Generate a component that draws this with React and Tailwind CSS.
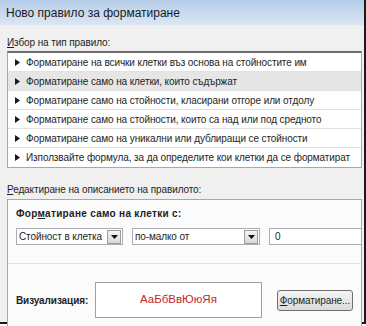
import React from 'react'

const rules = [
  'Форматиране на всички клетки въз основа на стойностите им',
  'Форматиране само на клетки, които съдържат',
  'Форматиране само на стойности, класирани отгоре или отдолу',
  'Форматиране само на стойности, които са над или под средното',
  'Форматиране само на уникални или дублиращи се стойности',
  'Използвайте формула, за да определите кои клетки да се форматират'
]

function Arrow() {
  return (
    <svg width="5" height="7" viewBox="0 0 5 7" className="shrink-0">
      <path d="M0 0 L5 3.5 L0 7 Z" fill="#1a1a1a" />
    </svg>
  )
}

function DropButton() {
  return (
    <div className="w-[14px] h-[14px] border border-[#9c9c9c] bg-gradient-to-b from-[#f4f4f4] to-[#d8d8d8] flex items-center justify-center shrink-0">
      <svg width="7" height="4" viewBox="0 0 7 4">
        <path d="M0 0 L7 0 L3.5 4 Z" fill="#111" />
      </svg>
    </div>
  )
}

function Combo({ label, width }) {
  return (
    <div className={`h-[17px] border border-[#abadb3] bg-white flex items-center justify-between pl-[2px] pr-[1px] ${width}`}>
      <span className="leading-none">{label}</span>
      <DropButton />
    </div>
  )
}

export default function App() {
  return (
    <div className="w-[366px] h-[326px] bg-white overflow-hidden font-[family-name:'Liberation_Sans',Arial,sans-serif] text-[10px] tracking-[-0.1px] text-[#1e1e1e]">
      <div className="w-[366px] h-[324px] bg-[#f0f0f0] border-r-2 border-b-2 border-[#1a1a1a] flex flex-col">
        {/* title bar */}
        <div className="h-[25px] shrink-0 bg-gradient-to-b from-[#b4cde9] to-[#dbe6f3] flex items-center px-[6px] text-[12px] tracking-normal text-[#1b1b1b]">
          Ново правило за форматиране
        </div>

        <div className="pl-[7px] pr-[2px] flex flex-col">
          <div className="mt-[11px] h-[14px] leading-[14px]">
            <span className="underline">И</span>збор на тип правило:
          </div>

          {/* rule type list */}
          <div className="mt-[1px] bg-white border border-[#a8a8a8] border-t-2 border-t-[#6e6e6e]">
            {rules.map((r, i) => (
              <div
                key={i}
                className={`h-[19px] flex items-center gap-[6px] pl-[7px] whitespace-nowrap ${i < rules.length - 1 ? 'border-b border-[#e2e2e2]' : ''} ${i === 1 ? 'bg-[#e6e6e6]' : ''}`}
              >
                <Arrow />
                <span>{r}</span>
              </div>
            ))}
          </div>

          <div className="mt-[15px] h-[14px] leading-[14px]">
            <span className="underline">Р</span>едактиране на описанието на правилото:
          </div>

          {/* rule description panel */}
          <div className="mt-[2px] h-[130px] bg-[#fbfbfb] border border-[#a8a8a8] border-b-0 flex flex-col">
            <div className="pt-[7px] pl-[8px]">
              <div className="h-[14px] leading-[14px] font-bold tracking-[0.3px]">
                Фор<span className="underline">м</span>атиране само на клетки с:
              </div>
              <div className="mt-[7px] flex items-center gap-[9px]">
                <Combo label="Стойност в клетка" width="w-[107px]" />
                <Combo label="по-малко от" width="w-[128px]" />
                <div className="h-[17px] flex-1 border border-[#abadb3] border-r-0 bg-white flex items-center pl-[5px]">
                  0
                </div>
              </div>
            </div>

            <div className="mt-[18px] border-t border-[#e1e1e1]" />

            <div className="mt-[18px] px-[8px] flex items-center">
              <div className="w-[81px] font-bold">Визуализация:</div>
              <div className="w-[171px] h-[36px] border border-[#a0a0a0] bg-white flex items-center justify-center text-[11.5px] tracking-normal text-[#c8242b]">
                АаБбВвЮюЯя
              </div>
              <div className="ml-[15px] w-[78px] h-[21px] rounded-[3px] border border-[#707070] bg-gradient-to-b from-[#f3f3f3] to-[#dcdcdc] flex items-center justify-center">
                <span className="underline">Ф</span>орматиране...
              </div>
            </div>
          </div>
        </div>
      </div>
    </div>
  )
}
